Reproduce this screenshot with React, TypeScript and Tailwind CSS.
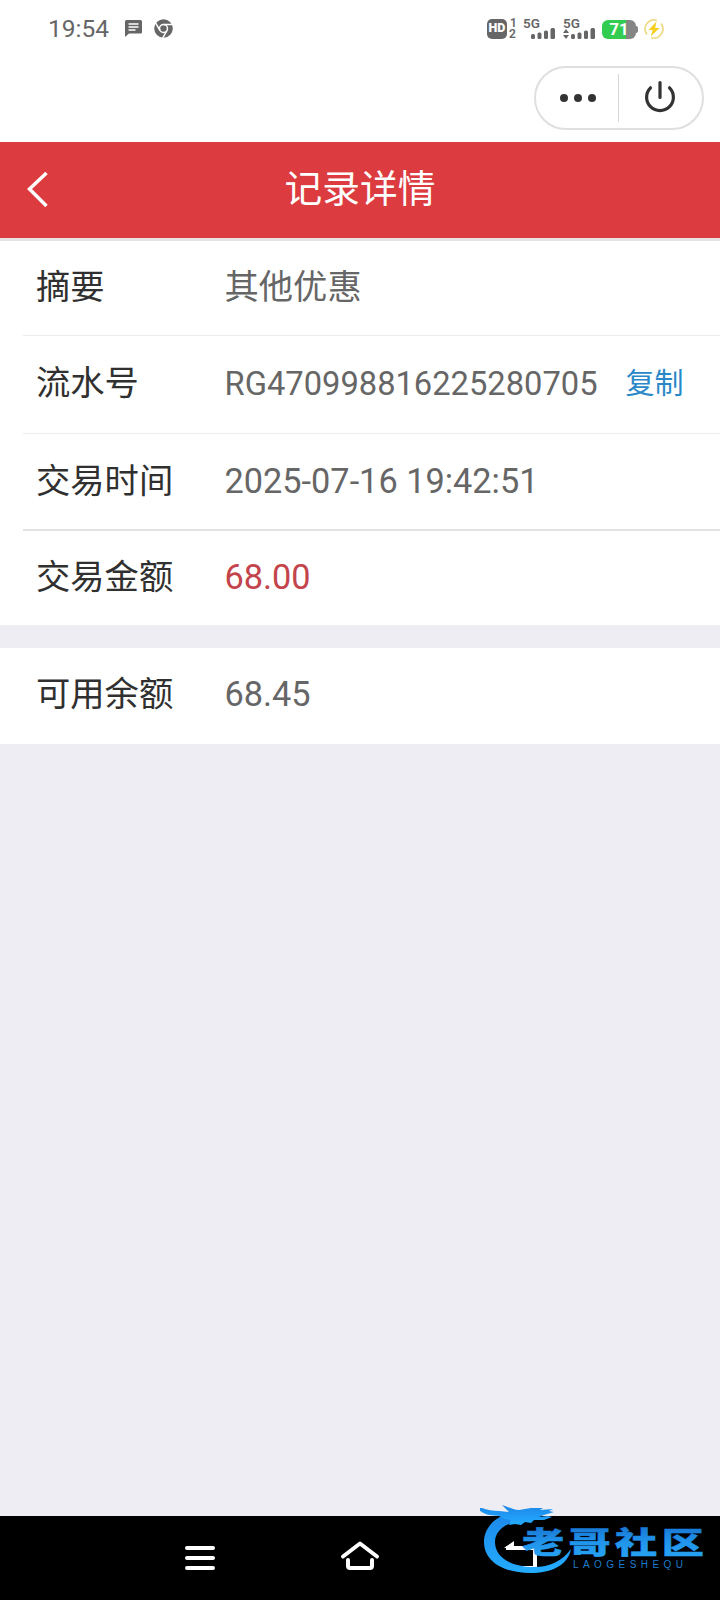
import { clsx } from "clsx";

type DetailRow = {
  label: string;
  value: string;
  valueClass?: string;
  action?: string;
  rowClass: string;
};

const rows: DetailRow[] = [
  { label: "摘要", value: "其他优惠", rowClass: "h-[95px] pb-0.5 border-b border-[#ececec]" },
  {
    label: "流水号",
    value: "RG470998816225280705",
    valueClass: "text-[32.7px] pt-[3px]",
    action: "复制",
    rowClass: "h-[98px] pb-[3px] border-b border-[#ececec]",
  },
  { label: "交易时间", value: "2025-07-16 19:42:51", rowClass: "h-[97px] border-b-2 border-[#e2e2e2]" },
  { label: "交易金额", value: "68.00", valueClass: "text-[#c4444c]", rowClass: "h-[94px] pb-[2px]" },
];

const balance: DetailRow = { label: "可用余额", value: "68.45", rowClass: "h-24 pb-[3px]" };

const Row = ({ row }: { row: DetailRow }) => (
  <div className={clsx("flex items-center ml-[23px] pl-[13px] text-[34.3px] leading-none whitespace-nowrap", row.rowClass)}>
    <span className="w-[188.5px] shrink-0 text-[#303030]">{row.label}</span>
    <span className={clsx(row.valueClass, !row.valueClass?.includes("text-[#") && "text-[#666]")}>{row.value}</span>
    {row.action && <button className="ml-[28px] pt-[3px] text-[29px] text-[#2a88c8]">{row.action}</button>}
  </div>
);

const Signal = ({ arrows }: { arrows?: boolean }) => (
  <div className="w-8 h-[22px] mr-2">
    <div className="h-[10px] pt-px text-[13.5px] leading-[9px] font-semibold">5G</div>
    <svg className="block" width="32" height="12" viewBox="0 0 32 12" fill="currentColor">
      {arrows && <path d="M0 5 3 1l3 4zM0 7h6l-3 4z" />}
      <rect x="8" y="6" width="4" height="5" rx="1.5" />
      <rect x="14.5" y="4.5" width="4" height="6.5" rx="1.5" />
      <rect x="21" y="2.5" width="4" height="8.5" rx="1.5" />
      <rect x="27.5" y="0" width="4.5" height="11" rx="1.5" />
    </svg>
  </div>
);

const StatusBar = () => (
  <div className="h-[58px] flex items-center pl-[48px] pr-[56px] text-[#666]">
    <span className="w-[77px] text-[24.5px] leading-none">19:54</span>
    <svg className="mb-[2px]" width="17" height="17" viewBox="0 0 17 17">
      <path d="M1.5 0h14Q17 0 17 1.5v11q0 1-1.5 1H4L0 17V1.5Q0 0 1.5 0z" fill="#666" />
      <path d="M3.5 4h10M3.5 7h10M3.5 10h7" stroke="#fff" strokeWidth="1.5" />
    </svg>
    <svg className="ml-3 mb-[2px]" width="19" height="19" viewBox="0 0 19 19">
      <circle cx="9.5" cy="9.5" r="9.3" fill="#666" />
      <g stroke="#fff" strokeWidth="1.5" fill="none">
        <circle cx="9.5" cy="9.5" r="4" />
        <path d="M9.5 5.5H18M6 11.5 1.7 4.2M13 11.5 8.7 19" />
      </g>
      <circle cx="9.5" cy="9.5" r="2.3" fill="#666" />
    </svg>

    <div className="ml-auto flex items-center pb-[1px]">
      <span className="flex items-center justify-center w-5 h-5 rounded-[5px] bg-[#666] text-white text-[12.5px] leading-none font-black">
        HD
      </span>
      <span className="flex flex-col w-[16px] pl-[2px] text-[12px] leading-[11px] font-semibold">
        <span className="pl-px">1</span>
        <span>2</span>
      </span>
      <Signal />
      <Signal arrows />
      <span className="flex items-center ml-[-1px] pt-px">
        <span className="flex items-center justify-center w-[34px] h-[19px] rounded-[6px] bg-linear-to-r from-[#31cc50] from-72% to-[#858585] to-72% text-white text-[17px] leading-none font-bold">
          71
        </span>
        <span className="w-[2px] h-[7px] rounded-r-sm bg-[#858585]" />
      </span>
      <svg className="ml-[6px]" width="20" height="20" viewBox="0 0 20 20">
        <path d="M13 1.5A9 9 0 0 0 3 15.5M7 18.5A9 9 0 0 0 17 4.5" stroke="#efdc8b" strokeWidth="1.8" fill="none" />
        <path d="M12.5 2.5 4.5 11h4.2l-2 6.5L15.500 9h-4.300z" fill="#f5cf20" />
      </svg>
    </div>
  </div>
);

const Capsule = () => (
  <div className="flex justify-end h-[84px] pt-2 pr-4">
    <div className="flex items-center w-[170px] h-[64px] rounded-full border-2 border-[#dfdfdf]">
      <div className="flex justify-center gap-[6px] w-[82px] pl-[2px]">
        <span className="size-2 rounded-full bg-[#333]" />
        <span className="size-2 rounded-full bg-[#333]" />
        <span className="size-2 rounded-full bg-[#333]" />
      </div>
      <span className="w-px h-12 bg-[#d6d6d6]" />
      <svg className="ml-[25px] mb-0.5" width="32" height="34" viewBox="0 0 32 34" fill="none" stroke="#333" strokeWidth="3.2" strokeLinecap="round">
        <path d="M16 2.5v15M6.5 7.8a13.4 13.4 0 1 0 19 0" />
      </svg>
    </div>
  </div>
);

const Watermark = () => (
  <svg className="absolute right-0 bottom-0" width="240" height="106" viewBox="0 0 240 106">
    <defs>
      <linearGradient id="ring" x1="0" y1="0" x2="0" y2="1">
        <stop offset="0" stopColor="#1c86e8" />
        <stop offset="1" stopColor="#24acff" />
      </linearGradient>
      <linearGradient id="word" x1="0" y1="0" x2="0" y2="1">
        <stop offset="0.2" stopColor="#1878d4" />
        <stop offset="0.55" stopColor="#2195eb" />
        <stop offset="1" stopColor="#28a6f5" />
      </linearGradient>
    </defs>
    {/* dragon ring */}
    <path
      d="M42 17C20 18 4 31 4 48c0 19 19 31 46 31 22 0 38-8 41-24-9 12-21 18-37 18-22 0-39-9-39-25 0-13 14-21 33-23z"
      fill="url(#ring)"
    />
    <path
      d="M2 14c5 2 11 3 17 3l10 1-7-7c7 2 11 5 17 5l12-2 12 0-3 2 13-1-4 2 5 1-10 3-5 2 9-1 4 1-8 3-10 0-3 3-6-1-4 3-6-1-6 1 2-5-6-1-6-3c-8-1-14 0-22-8z"
      fill="url(#ring)"
    />
    <g
      transform="translate(42 59) scale(1.17 0.82)"
      fill="url(#word)"
      stroke="url(#word)"
      strokeWidth="0.6"
      fontFamily="'Noto Sans CJK SC', sans-serif"
      fontWeight="900"
      fontSize="36"
      letterSpacing="3.8"
    >
      <text>老哥社区</text>
    </g>
    <text x="93" y="73.5" textLength="110" fill="#1c7dcc" fontFamily="'Liberation Sans', sans-serif" fontSize="10">
      LAOGESHEQU
    </text>
  </svg>
);

const App = () => {
  return (
    <div className="flex flex-col w-[720px] h-[1600px] overflow-hidden bg-[#eeedf3] font-['Roboto','Noto_Sans_CJK_SC',sans-serif]">
      {/* System area */}
      <div className="bg-white">
        <StatusBar />
        <Capsule />
      </div>

      {/* Header */}
      <header className="flex items-center h-24 px-[27px] bg-[#dc3b40] text-white">
        <svg className="mb-[3px]" width="22" height="36" viewBox="0 0 22 36" fill="none" stroke="currentColor" strokeWidth="3.5">
          <path d="M19.5 2 2.5 18l17 17" />
        </svg>
        <h1 className="flex-1 pr-[22px] text-center text-[37.7px] leading-none">记录详情</h1>
      </header>

      <main className="flex-1">
        <div className="bg-white border-t-[3px] border-[#e5e1e5]">
          {rows.map((row) => (
            <Row key={row.label} row={row} />
          ))}
        </div>
        <div className="mt-[23px] bg-white">
          <Row row={balance} />
        </div>
      </main>

      {/* Navigation bar */}
      <nav className="relative flex h-[84px] pt-[23px] bg-black text-white">
        <svg className="ml-[183px]" width="34" height="36" viewBox="0 0 34 36" stroke="currentColor" strokeWidth="4" strokeLinecap="round">
          <path d="M4 9h26M4 19h26M4 29h26" />
        </svg>
        <svg className="ml-[123px]" width="40" height="36" viewBox="0 0 40 36" fill="none" stroke="currentColor" strokeWidth="4" strokeLinecap="round" strokeLinejoin="round">
          <path d="M3 17.5 20 4.5l17 13M8 21v6q0 2 2 2h20q2 0 2-2v-6" />
        </svg>
        <svg className="ml-[123px]" width="36" height="36" viewBox="0 0 36 36" fill="none" stroke="currentColor" strokeWidth="4">
          <path d="M3 9h29v20H9" />
          <path d="M1 9 11 2v7z" fill="currentColor" stroke="none" />
        </svg>
        <Watermark />
      </nav>
    </div>
  );
};

export default App;
